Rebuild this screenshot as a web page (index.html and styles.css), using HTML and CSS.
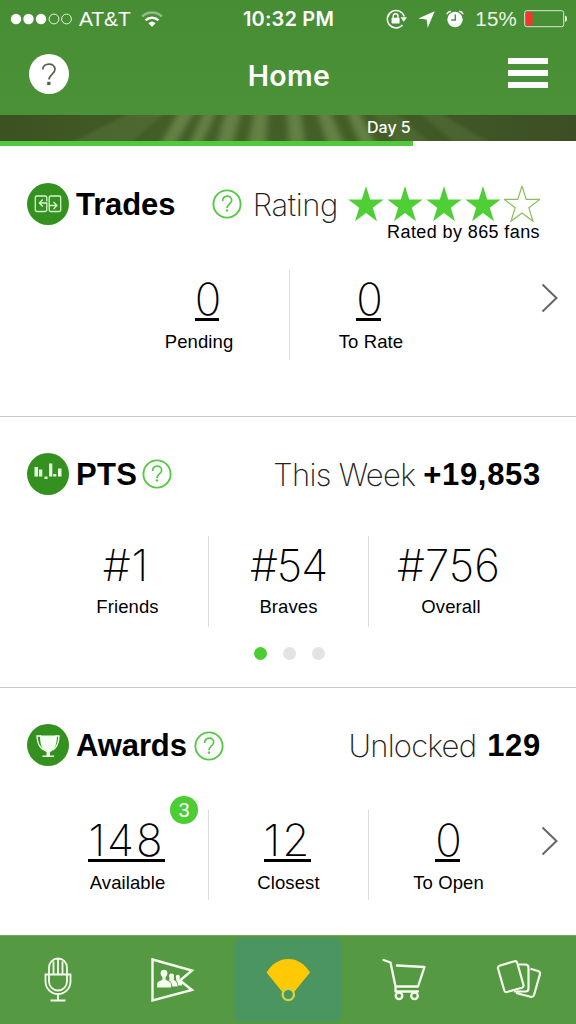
FILE: index.html
```html
<!DOCTYPE html>
<html lang="en">
<head>
<meta charset="utf-8">
<title>Home</title>
<link rel="stylesheet" href="styles.css">
</head>
<body>
<svg class="defs" width="0" height="0">
  <symbol id="star" viewBox="0 0 36 36"><path d="M18 0l4.200 13.400h13.500l-10.900 8.300 4.200 13.600L18 27l-11 8.300 4.200-13.600-10.900-8.300h13.500z"/></symbol>
  <symbol id="help" viewBox="0 0 30 30"><circle cx="15" cy="15" r="13.600" fill="none" stroke="currentColor" stroke-width="1.900"/><path d="M10.700 12.100c0-6.400 9-6.400 9-.8 0 3.500-4.600 3.900-4.600 7.700" fill="none" stroke="currentColor" stroke-width="1.700"/><circle cx="15" cy="21.500" r="1.200" fill="currentColor"/></symbol>
  <symbol id="chevron" viewBox="0 0 18 30"><path d="M1.500 1.500L15.500 15 1.500 28.500" fill="none" stroke="#666" stroke-width="2"/></symbol>
</svg>
<header class="top">
  <div class="status">
    <div class="carrier">
      <svg width="62" height="14" viewBox="0 0 62 14"><g fill="#fff"><circle cx="6" cy="7" r="5.200"/><circle cx="18.500" cy="7" r="5.200"/><circle cx="31" cy="7" r="5.200"/></g><g fill="none" stroke="#e4f3dc" stroke-width="1"><circle cx="44" cy="7" r="4.900"/><circle cx="56.500" cy="7" r="4.900"/></g></svg>
      <span class="att">AT&amp;T</span>
      <svg width="22" height="17" viewBox="0 0 22 17" fill="none" stroke="#fff" stroke-width="2.500"><path d="M1.200 5.500a14 14 0 0 1 19.600 0" stroke-opacity=".4"/><path d="M4.500 9.400a9.500 9.500 0 0 1 13 0"/><path d="M7.500 12.200a5.200 5.200 0 0 1 7 0L11 16z" fill="#fff" stroke="none"/></svg>
    </div>
    <div class="clock">10:32 PM</div>
    <div class="indicators">
      <svg width="21" height="20" viewBox="0 0 21 20"><path d="M18.300 7.500A8.700 8.700 0 1 0 16.500 16" fill="none" stroke="#fff" stroke-width="1.500"/><path d="M14.500 8.300h6.500l-3.200 4.400z" fill="#fff"/><rect x="5.600" y="8.800" width="8" height="5.700" rx=".7" fill="#fff"/><path d="M7.200 9V7.200a2.400 2.400 0 0 1 4.800 0V9" fill="none" stroke="#fff" stroke-width="1.400"/></svg>
      <svg class="arrow" width="17" height="17" viewBox="0 0 17 17"><path d="M16.700.3L9.700 16.700 8.600 8.500.3 7.400z" fill="#fff"/></svg>
      <svg class="alarm" width="18" height="18" viewBox="0 0 18 18"><circle cx="9" cy="9.500" r="7.700" fill="#fff"/><path d="M9.300 4.500v5.500H5.300" fill="none" stroke="#4a9137" stroke-width="1.400"/><path d="M.8 4.200Q2 1.500 4.800 1.200M17.200 4.200Q16 1.500 13.200 1.200" fill="none" stroke="#fff" stroke-width="1.500"/></svg>
      <span class="percent">15%</span>
      <svg width="43" height="18" viewBox="0 0 43 18"><rect x=".7" y=".7" width="39" height="16" rx="2" fill="none" stroke="#fff" stroke-opacity=".8"/><rect x="2" y="2" width="6.500" height="13.500" rx="1" fill="#f8342c"/><path d="M41 5.500q2 .5 2 3.200t-2 3.200z" fill="#fff"/></svg>
    </div>
  </div>
  <div class="nav">
    <svg width="42" height="42" viewBox="0 0 42 42"><circle cx="21" cy="21" r="20" fill="#fff"/><path d="M14.800 16.500c0-7.200 12.200-7.200 12.200-.2 0 5-6 5.200-6 10.300" fill="none" stroke="#555e50" stroke-width="1.700"/><rect x="19.200" y="28.800" width="3.300" height="3.300" fill="#555e50"/></svg>
    <h1>Home</h1>
    <div class="menu"><i></i><i></i><i></i></div>
  </div>
</header>
<div class="field">
  <svg class="mow" width="576" height="26" viewBox="0 0 576 26">
    <defs><filter id="soft"><feGaussianBlur stdDeviation="3 .6"/></filter></defs>
    <g fill="#6f8c50" opacity=".75" filter="url(#soft)"><path d="M161 28L178-2h16L176 28zM190 28L203-2h13L202 28zM217 28L225-2h16L233 28zM248 28L254-2h14L266 28zM289 28L287-2h14L305 28zM327 28L317-2h14L344 28zM360 28L347-2h13L375 28z"/><path opacity=".35" d="M70 28L130-2h35L130 28zM395 28L372-2h24L430 28zM455 28L420-2h20L490 28z"/></g>
  </svg>
  <span class="day">Day 5</span>
</div>
<div class="progress"><div class="done"></div></div>

<main>
  <section class="card trades">
    <div class="head">
      <svg width="42" height="42" viewBox="0 0 42 42"><circle cx="21" cy="21" r="21" fill="#349120"/><g fill="none" stroke="#d6f5ce" stroke-width="1.300"><path d="M19.800 18.500V14.500q0-1.500-1.500-1.500H9.800q-1.500 0-1.500 1.500V27q0 1.500 1.500 1.500h8.500q1.500 0 1.500-1.500V20H12.500M15.800 16.500L12.300 20l3.500 3.500"/><path d="M22.200 22.500V27q0 1.500 1.500 1.500h8.500q1.500 0 1.500-1.500V14.500q0-1.500-1.500-1.500h-8.500q-1.500 0-1.500 1.500v8h7.300M26.500 19l3.500 3.500-3.500 3.500"/></g></svg>
      <h2>Trades</h2>
      <div class="right">
        <svg class="help" width="30" height="30"><use href="#help"/></svg>
        <span class="light rating">Rating</span>
        <div class="stars">
          <svg width="36" height="36"><use href="#star"/></svg><svg width="36" height="36"><use href="#star"/></svg><svg width="36" height="36"><use href="#star"/></svg><svg width="36" height="36"><use href="#star"/></svg><svg class="empty" width="36" height="36"><use href="#star"/></svg>
        </div>
      </div>
    </div>
    <div class="fans">Rated by 865 fans</div>
    <div class="stats two">
      <div class="stat"><b class="linked">0</b><span>Pending</span></div>
      <div class="stat"><b class="linked">0</b><span>To Rate</span></div>
      <svg class="chev" width="18" height="30"><use href="#chevron"/></svg>
    </div>
  </section>
  <section class="card pts">
    <div class="head">
      <svg width="42" height="42" viewBox="0 0 42 42"><circle cx="21" cy="21" r="21" fill="#349120"/><path d="M7.500 14h3.500v9.500H7.500zM12 16.500h3.300v7H12zM17.500 23.500h3v2.500h-3zM22 10.500h3.300v13H22zM26.300 21h3v2.500h-3zM31 15.500h3.500v8H31z" fill="#e5ffdf"/></svg>
      <h2>PTS</h2>
      <svg class="help" width="30" height="30"><use href="#help"/></svg>
      <div class="right"><span class="light week">This Week</span><strong>+19,853</strong></div>
    </div>
    <div class="stats">
      <div class="stat"><b>#1</b><span>Friends</span></div>
      <div class="stat"><b>#54</b><span>Braves</span></div>
      <div class="stat"><b class="wide">#756</b><span class="overall">Overall</span></div>
    </div>
    <div class="pager"><i class="on"></i><i></i><i></i></div>
  </section>
  <section class="card awards">
    <div class="head">
      <svg width="42" height="42" viewBox="0 0 42 42"><circle cx="21" cy="21" r="21" fill="#349120"/><path d="M13 11.500h17c0 9-2.500 15-7 16.500v3.500h4V33H15.500v-1.500h4V28c-4.500-1.500-6.500-7.500-6.500-16.500z" fill="#f4fff1"/><path d="M14 12H10c.3 6.500 2.300 11.500 6.500 14M28.500 12H32c-.3 6.500-2.300 11.500-6 14" fill="none" stroke="#f4fff1" stroke-width="1.400"/></svg>
      <h2>Awards</h2>
      <svg class="help" width="30" height="30"><use href="#help"/></svg>
      <div class="right"><span class="light unlocked">Unlocked</span><strong>129</strong></div>
    </div>
    <div class="stats">
      <div class="stat"><b class="linked">148</b><span>Available</span><em class="badge">3</em></div>
      <div class="stat"><b class="linked">12</b><span>Closest</span></div>
      <div class="stat"><b class="linked single">0</b><span>To Open</span></div>
      <svg class="chev" width="18" height="30"><use href="#chevron"/></svg>
    </div>
  </section>
</main>

<nav class="tabs">
  <div class="tab"><svg width="28" height="46" viewBox="0 0 28 46" fill="none" stroke="#f5ffed" stroke-width="1.800"><path d="M5 17.500V10.500a9 9 0 0 1 18 0v7M9.500 17.500V4.500M14 17.500V2M18.500 17.500V4.500M1.500 17.500h25v7a12.500 12.500 0 0 1-25 0zM5 17.500v7a9 9 0 0 0 18 0v-7M14 37v6M6.500 43.500h15"/></svg></div>
  <div class="tab"><svg width="46" height="46" viewBox="0 0 46 46"><path d="M2.500 2.500L42 13.500 30 23.500 42 33 2.500 43.500z" fill="none" stroke="#f5ffed" stroke-width="2.400"/><g fill="#f5ffed"><path d="M7 30.500v-3q0-3 4-4l1.500-1v-2q-2-2-2-4.500c0-4.500 7-4.500 7 0q0 2.500-2 4.500v2l1.500 1q4 1 4 4v3z"/><path d="M22 29.500q0-5-3.500-6.500l1-.5v-1.500q-1.500-4.500 2-4.500 3.500 0 2.300 4.500v2l1 .5q2.700 1.500 2.700 6z"/><path d="M28 28.500q0-4-1.800-5.300v-1.400q-1.200-4 1.600-4 2.800 0 1.800 4v1.200l1 .5q1.600 1 1.600 5z"/></g></svg></div>
  <div class="tab active"><svg width="46" height="46" viewBox="0 0 46 46"><path d="M1.500 15.500Q10 2 23.300 2T45 15.500L27.500 37h-8.500z" fill="#ffca05"/><circle cx="23.300" cy="37.500" r="5.700" fill="#4b9560" stroke="#d4d33e" stroke-width="2.300"/></svg></div>
  <div class="tab end"><svg width="46" height="46" viewBox="0 0 46 46" fill="none" stroke="#f5ffed" stroke-width="2.300" stroke-linecap="round" stroke-linejoin="round"><path d="M2.500 3L9.500 5.500 14.500 29.500H37L43.500 10 16 8.500M14.500 29.500v5H37"/><circle cx="18" cy="38.800" r="3.300"/><circle cx="33.500" cy="38.800" r="3.300"/></svg></div>
  <div class="tab end"><svg width="46" height="46" viewBox="0 0 46 46" fill="none" stroke="#f5ffed" stroke-width="2.200" stroke-linejoin="round"><path d="M4 8.500L18.500 4.200q2-.5 2.700 1.500L27.500 28q.5 2-1.500 2.700L11 35q-2 .5-2.700-1.500L2 11.500Q1.500 9.300 4 8.500z"/><path d="M22.500 7.500H29q3.500 0 3.500 3v21q0 3-3 3H18M34.500 11.800L42 14q2.500.8 2 3L38 38q-.8 2.500-3.500 1.800L20 36"/></svg></div>
</nav>
</body>
</html>
```
FILE: styles.css
```css
* { box-sizing: border-box; }
body { margin: 0; width: 576px; height: 1024px; overflow: hidden; background: #fff; color: #000; font-family: "Liberation Sans", Arial, sans-serif; display: flex; flex-direction: column; }
svg { display: block; flex: none; }
.defs { display: none; }
h1, h2 { margin: 0; }

.top { height: 115px; background: linear-gradient(#468d34, #4a9138); color: #fff; }
.status { display: grid; grid-template-columns: 1fr auto 1fr; height: 38px; align-items: center; padding: 0 9px 0 10px; font-size: 20px; }
.carrier { display: flex; align-items: center; }
.att { margin: 0 10px 0 7px; font-size: 21px; letter-spacing: -.1px; }
.clock { font-family: Inter, sans-serif; font-weight: 600; font-size: 20px; letter-spacing: .2px; }
.indicators { display: flex; align-items: center; justify-content: flex-end; }
.arrow { margin-left: 11px; }
.alarm { margin-left: 11px; }
.percent { margin: 0 7px 0 11px; font-size: 20.500px; letter-spacing: .2px; color: #edf8e8; }
.nav { display: flex; align-items: center; justify-content: space-between; height: 77px; padding: 0 28px; }
.nav > svg { margin-top: -6px; }
.nav h1 { margin-top: -2px; font-family: Inter, sans-serif; font-size: 28.500px; font-weight: 600; letter-spacing: .4px; }
.menu { display: grid; gap: 6px; width: 40px; margin-top: -8px; }
.menu i { height: 6px; background: #fff; }

.field { position: relative; height: 26px; flex: none; background: linear-gradient(90deg, #3c5221, #445e27 30%, #445e27 60%, #3c4f24); overflow: hidden; }
.mow { position: absolute; inset: 0; }
.day { position: relative; display: block; margin-left: 367px; font: 500 16px/25px Inter, sans-serif; color: #fff; }
.progress { height: 5px; flex: none; background: #fff; }
.done { width: 413px; height: 5px; background: #52c83d; }

.card { border-bottom: 1px solid #c8c8c8; padding-top: 36px; }
.trades { height: 271px; padding-top: 37px; }
.pts { height: 271px; }
.awards { height: 247px; border: 0; }
.head { display: flex; align-items: center; height: 42px; padding: 0 36px 0 27px; }
.head h2 { margin: 2px 0 0 7px; font-size: 31px; line-height: 42px; letter-spacing: -.1px; }
.pts h2 { letter-spacing: .3px; }
.right { display: flex; align-items: center; margin-left: auto; }
.help { color: #55c944; margin-left: 5px; }
.awards .help { margin: 2px 0 0 7px; }
.light { font-family: Inter, sans-serif; font-weight: 200; font-size: 31px; line-height: 42px; color: #222; }
.rating { margin: 2px 10px 0 11px; letter-spacing: -.4px; }
.week { margin: 2px 8px 0 0; letter-spacing: -.7px; }
.unlocked { margin: 1px 11px 0 0; letter-spacing: -.8px; }
.head strong { font-size: 31px; line-height: 42px; letter-spacing: .7px; margin: 1px -1px 0 0; }
.awards strong { letter-spacing: .7px; }
.stars { display: flex; gap: 3px; fill: #4ecf35; }
.stars .empty { fill: none; stroke: #8abf59; stroke-width: 1.200; }
.fans { height: 20px; margin-top: -3px; padding-right: 36px; text-align: right; font-size: 18px; line-height: 20px; letter-spacing: .4px; }

.stats { position: relative; display: grid; grid-template-columns: 161px 160px 160px; height: 90px; margin: 41px 0 0 47px; }
.pts .stats { height: 91px; }
.awards .stats { margin-top: 44px; }
.two { grid-template-columns: 160px 160px; margin: 28px 0 0 129px; }
.trades .two { margin-left: 129px; }
.stat { position: relative; display: flex; flex-direction: column; align-items: center; padding-top: 7px; }
.stat + .stat { border-left: 1px solid #dcdcdc; }
.stat b { height: 44px; font: 200 44px/44px Inter, sans-serif; letter-spacing: -1px; }
.pts .stat:first-child b { letter-spacing: 1px; margin-right: 3px; }
.stat .wide { letter-spacing: 0; }
.stat .linked { border-bottom: 3px solid #000; letter-spacing: 2px; }
.two .stat .linked, .stat .single { letter-spacing: -2px; }
.two .stat b { margin-right: 4px; }
.stat span { margin-top: 10px; font-size: 18.500px; line-height: 22px; letter-spacing: .1px; }
.pts .stat span { margin-top: 9px; }
.stat .overall { margin-left: 5px; }
.awards .stat { padding-top: 8px; }
.awards .stat b { margin-right: 2px; }
.two .stat span { margin-right: 20px; }
.two .stat + .stat b { margin-right: 2px; }
.two .stat + .stat span { margin: 10px 0 0 3px; }
.chev { position: absolute; left: 494px; top: 16px; }
.two .chev { left: 412px; top: 13px; }
.badge { position: absolute; left: 123px; top: -14px; width: 28px; height: 28px; border-radius: 50%; background: #4ccd34; color: #fff; text-align: center; font: 20px/29px "Liberation Sans", sans-serif; }
.pager { display: flex; justify-content: center; gap: 16px; margin-top: 20px; padding-left: 2px; }
.pager i { width: 13px; height: 13px; border-radius: 50%; background: #e3e3e3; }
.pager .on { background: #4ccd34; }

.tabs { display: grid; grid-template-columns: repeat(5, 1fr); height: 89px; padding: 0; background: #559943; border-top: 1px solid #75a566; }
.tab { display: flex; align-items: center; justify-content: center; height: 88px; }
.end { padding-left: 2px; }
.active { height: 82px; width: 106px; margin: 3px auto; border-radius: 6px; background: #4b9560; box-shadow: 0 0 3px #4b9560; }
```
